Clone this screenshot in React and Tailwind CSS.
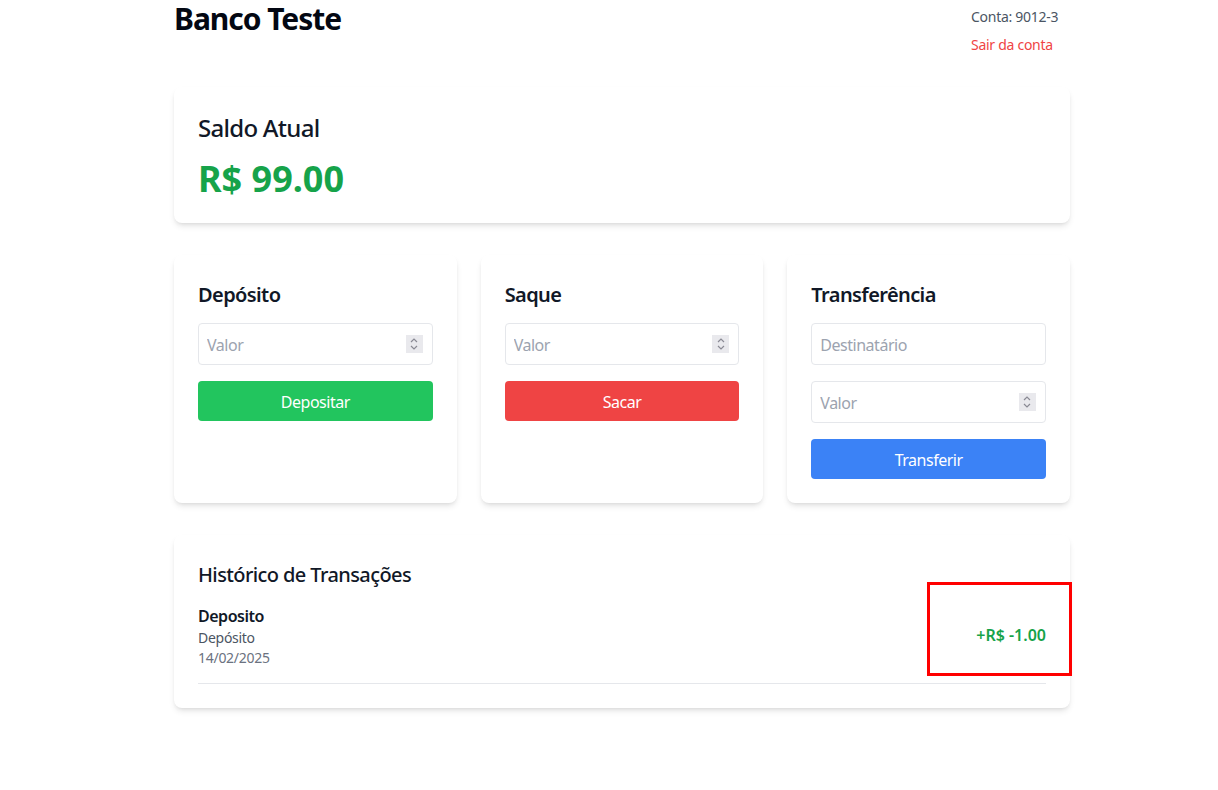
import React from 'react';

const Spinner = () => (
  <div className="flex h-[18px] w-[17px] items-center justify-center bg-[#e9e9ed]">
    <svg width="8" height="14" viewBox="0 0 8 14" fill="none" stroke="#8a8a94" strokeWidth="1.2">
      <path d="M1 5 L4 2 L7 5" />
      <path d="M1 9 L4 12 L7 9" />
    </svg>
  </div>
);

const NumberField = ({ placeholder }) => (
  <div className="flex h-[42px] w-full items-center rounded border border-[#e5e7eb] pl-2 pr-[9px]">
    <input
      type="text"
      placeholder={placeholder}
      className="min-w-0 flex-1 bg-transparent pt-px text-base tracking-[-0.03em] outline-none placeholder:text-[#9ca3af]"
    />
    <Spinner />
  </div>
);

const TextField = ({ placeholder }) => (
  <input
    type="text"
    placeholder={placeholder}
    className="h-[42px] w-full rounded border border-[#e5e7eb] px-2 pt-px text-base tracking-[-0.03em] outline-none placeholder:text-[#9ca3af]"
  />
);

const ActionCard = ({ title, children }) => (
  <div className="rounded-lg bg-white p-6 shadow-md">
    <h2 className="mb-[14px] pt-[2px] text-xl font-semibold leading-7 tracking-[-0.03em] text-[#111827]">{title}</h2>
    <div className="space-y-4">{children}</div>
  </div>
);

export default function App() {
  return (
    <div className="min-h-screen bg-white font-['Noto_Sans',sans-serif] text-[#111827]">
      <div className="ml-[174px] w-[896px]">
        {/* cabeçalho */}
        <div className="mb-8 flex h-[55px] items-start justify-between">
          <h1 className="pt-px text-3xl font-bold leading-9 tracking-[-0.035em] text-[#030712]">Banco Teste</h1>
          <div className="flex w-[99px] flex-col items-start pt-[7px] text-sm tracking-[-0.02em]">
            <span className="leading-5 text-[#4b5563]">Conta: 9012-3</span>
            <button className="mt-2 leading-5 text-[#ef4444]">Sair da conta</button>
          </div>
        </div>

        {/* saldo */}
        <div className="mb-8 rounded-lg bg-white p-6 shadow-md">
          <h2 className="mb-[15px] pt-px text-2xl font-medium leading-8 tracking-[-0.03em] text-[#111827]">Saldo Atual</h2>
          <p className="text-4xl font-bold leading-10 text-[#16a34a]">R$ 99.00</p>
        </div>

        {/* operações */}
        <div className="mb-8 grid grid-cols-3 gap-6">
          <ActionCard title="Depósito">
            <NumberField placeholder="Valor" />
            <button className="h-10 w-full rounded bg-[#22c55e] pt-px text-base tracking-[-0.03em] text-white">Depositar</button>
          </ActionCard>
          <ActionCard title="Saque">
            <NumberField placeholder="Valor" />
            <button className="h-10 w-full rounded bg-[#ef4444] pt-px text-base tracking-[-0.03em] text-white">Sacar</button>
          </ActionCard>
          <ActionCard title="Transferência">
            <TextField placeholder="Destinatário" />
            <NumberField placeholder="Valor" />
            <button className="h-10 w-full rounded bg-[#3b82f6] pt-px text-base tracking-[-0.03em] text-white">Transferir</button>
          </ActionCard>
        </div>

        {/* histórico */}
        <div className="relative rounded-lg bg-white p-6 shadow-md">
          <h2 className="mb-[14px] pt-[2px] text-xl font-medium leading-7 tracking-[-0.03em] text-[#111827]">Histórico de Transações</h2>
          <div className="flex items-center justify-between border-b border-[#e5e7eb] pb-4">
            <div className="pt-px">
              <p className="text-base font-semibold leading-6 tracking-[-0.03em] text-[#111827]">Deposito</p>
              <p className="text-sm leading-5 tracking-[-0.02em] text-[#4b5563]">Depósito</p>
              <p className="-mb-px text-sm leading-5 tracking-[-0.02em] text-[#6b7280]">14/02/2025</p>
            </div>
            <span className="text-base font-semibold text-[#16a34a]">+R$ -1.00</span>
          </div>
          {/* marcação vermelha da captura */}
          <div className="absolute left-[753px] top-[47px] h-[94px] w-[145px] border-[3px] border-[#ff0000]" />
        </div>
      </div>
    </div>
  );
}
